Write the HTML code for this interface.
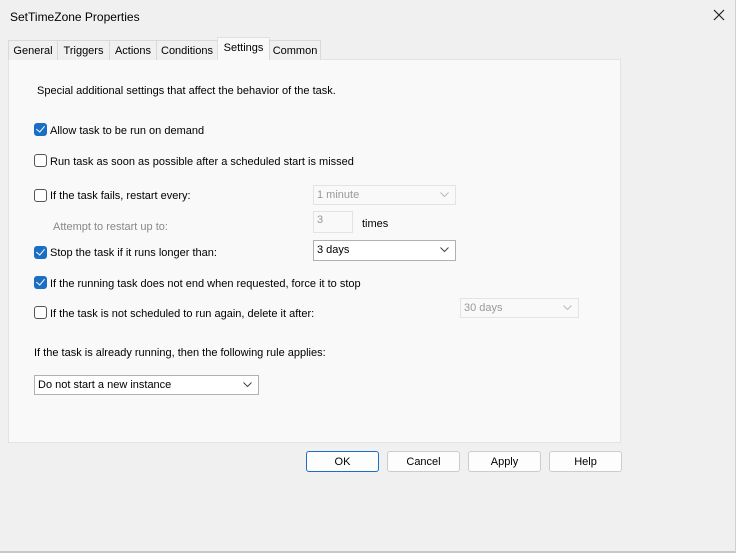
<!DOCTYPE html>
<html><head><style>
*{margin:0;padding:0;box-sizing:border-box}
body{width:736px;height:553px;background:#f0f0f0;font-family:"Liberation Sans",sans-serif;font-size:11px;color:#000;position:relative;overflow:hidden}
.a{position:absolute;white-space:nowrap}
.t{margin-top:1px}
.tab{position:absolute;top:40px;height:20px;border:1px solid #d9d9d9;border-bottom:none;background:#f0f0f0;text-align:center;line-height:20px;font-size:11px}
.panel{position:absolute;left:8px;top:59px;width:613px;height:384px;background:#f9f9f9;border:1px solid #e3e3e3}
.cb{position:absolute;width:13px;height:13px;border:1px solid #555;border-radius:3px;background:#fff}
.cb.on{background:#1a6fc4;border-color:#1a6fc4}
.cb.on:after{content:"";position:absolute;left:3px;top:0px;width:4px;height:7px;border:solid #fff;border-width:0 1.5px 1.5px 0;transform:rotate(40deg)}
.dd{position:absolute;background:#fff;border:1px solid #b0b0b0;line-height:19px;padding-left:3px}
.dd.dis{background:#f9f9f9;border-color:#e3e3e3;color:#999}
.dd svg{position:absolute;right:6px;top:6px}
.btn{position:absolute;top:451px;width:73px;height:21px;border:1px solid #ccc;border-radius:3px;background:#fdfdfd;text-align:center;line-height:21px}
</style></head><body>
<div class="a" style="left:10px;top:10px;font-size:12px">SetTimeZone Properties</div>
<svg class="a" style="left:713px;top:9px" width="12" height="12"><path d="M1 1L11 11M11 1L1 11" stroke="#222" stroke-width="1.2"/></svg>
<div class="panel"></div>
<div class="tab" style="left:8px;width:50px">General</div>
<div class="tab" style="left:57px;width:53px">Triggers</div>
<div class="tab" style="left:109px;width:48px">Actions</div>
<div class="tab" style="left:156px;width:62px">Conditions</div>
<div class="tab" style="left:217px;width:53px;top:37px;height:23px;background:#f9f9f9;border-color:#e0e0e0;line-height:20px">Settings</div>
<div class="tab" style="left:269px;width:52px">Common</div>

<div class="a" style="left:37px;top:85px">Special additional settings that affect the behavior of the task.</div>

<div class="cb on" style="left:34px;top:123px"></div><div class="a" style="left:50px;top:125px">Allow task to be run on demand</div>
<div class="cb" style="left:34px;top:154px"></div><div class="a" style="left:50px;top:156px">Run task as soon as possible after a scheduled start is missed</div>
<div class="cb" style="left:34px;top:189px"></div><div class="a" style="left:50px;top:190px">If the task fails, restart every:</div>
<div class="a" style="left:53px;top:221px;color:#888">Attempt to restart up to:</div>
<div class="cb on" style="left:34px;top:246px"></div><div class="a" style="left:50px;top:247px">Stop the task if it runs longer than:</div>
<div class="cb on" style="left:34px;top:276px"></div><div class="a" style="left:50px;top:278px">If the running task does not end when requested, force it to stop</div>
<div class="cb" style="left:34px;top:306px"></div><div class="a" style="left:50px;top:308px">If the task is not scheduled to run again, delete it after:</div>
<div class="a" style="left:34px;top:347px">If the task is already running, then the following rule applies:</div>

<div class="dd dis" style="left:313px;top:185px;width:143px;height:20px">1 minute<svg width="9" height="6"><path d="M0.5 0.5L4.5 4.5L8.5 0.5" fill="none" stroke="#bbb"/></svg></div>
<div class="dd dis" style="left:313px;top:211px;width:40px;height:22px;line-height:17px">3</div>
<div class="a" style="left:362px;top:218px">times</div>
<div class="dd" style="left:313px;top:240px;width:143px;height:21px">3 days<svg width="9" height="6"><path d="M0.5 0.5L4.5 4.5L8.5 0.5" fill="none" stroke="#444"/></svg></div>
<div class="dd dis" style="left:460px;top:298px;width:119px;height:20px">30 days<svg width="9" height="6"><path d="M0.5 0.5L4.5 4.5L8.5 0.5" fill="none" stroke="#bbb"/></svg></div>
<div class="dd" style="left:34px;top:375px;width:225px;height:20px">Do not start a new instance<svg width="9" height="6"><path d="M0.5 0.5L4.5 4.5L8.5 0.5" fill="none" stroke="#444"/></svg></div>

<div class="btn" style="left:306px;border-color:#1a6fc4">OK</div>
<div class="btn" style="left:387px">Cancel</div>
<div class="btn" style="left:468px">Apply</div>
<div class="btn" style="left:549px">Help</div>
<div class="a" style="left:0;top:551px;width:736px;height:2px;background:#c8c8c8"></div>
<div class="a" style="left:735px;top:0;width:1px;height:553px;background:#d0d0d0"></div>
</body></html>
